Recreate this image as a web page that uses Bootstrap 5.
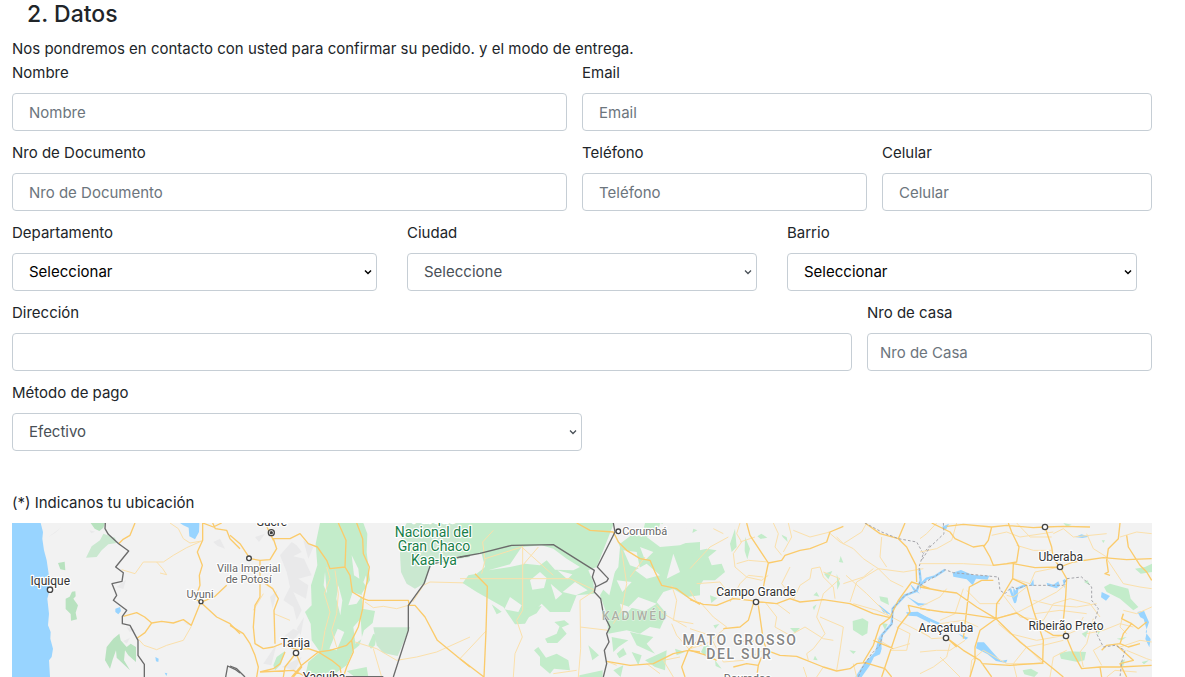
<!DOCTYPE html>
<html lang="es">
<head>
<meta charset="utf-8">
<meta name="viewport" content="width=device-width, initial-scale=1">
<title>Datos</title>
<link rel="stylesheet" href="https://cdn.jsdelivr.net/npm/bootstrap@5.3.0/dist/css/bootstrap.min.css">
<style>
body { font-family: Inter, "Liberation Sans", sans-serif; font-size: 15px; line-height: 24px; color: #212529; }
.checkout { padding: 0 33px 0 12px; }
.checkout h4 { font-size: 23px; line-height: 29px; font-weight: 500; padding-left: 15px; }
.field { margin-bottom: 10px; }
.gap-end { padding-right: 15px; }
.gap-start { padding-left: 15px; }
.form-control, .form-select { height: 38px; font-size: 15px; line-height: 24px; border-color: #c6ced5; border-radius: 4px; padding-left: 16px; background-color: #fff; }
.form-control::placeholder { color: #6c757d; }
.form-control.tight { padding-left: 12px; }
.form-select { color: #495057; background-position: right 4px center; background-size: 8px 8px; background-image: url("data:image/svg+xml,%3Csvg xmlns='http://www.w3.org/2000/svg' viewBox='0 0 8 8'%3E%3Cpath d='M1 2.5l3 3 3-3' fill='none' stroke='%23495057' stroke-width='1.3'/%3E%3C/svg%3E"); }
.form-select.strong { color: #000; background-image: url("data:image/svg+xml,%3Csvg xmlns='http://www.w3.org/2000/svg' viewBox='0 0 8 8'%3E%3Cpath d='M1 2.5l3 3 3-3' fill='none' stroke='%23000' stroke-width='1.5'/%3E%3C/svg%3E"); }
.location { margin-top: 30px; }
.map { background: #f2f2f2; font-family: Roboto, sans-serif; }
.map path { fill: none; stroke-linejoin: round; }
.map .water { fill: #98d4ff; }
.map .park { fill: #c3ecca; }
.map .reserve { fill: #cae8d0; }
.map .wood { fill: #b8e2bf; }
.map .land { fill: #f2f2f2; }
.map .relief { fill: #e9e9ea; }
.map .road { stroke: #fbcb6b; stroke-width: 4; }
.map .lane { stroke: #fbe0ab; stroke-width: 3; }
.map .river { stroke: #98d4ff; stroke-width: 7; }
.map .border-line { stroke: #6b6b6b; stroke-width: 4; }
.map .state { stroke: #a5a5aa; stroke-width: 3; stroke-dasharray: 8 6; }
.map circle { fill: #fff; stroke: #444; stroke-width: 4; }
.map .capital { fill: #222; }
.map text { font-size: 36px; fill: #333; stroke: #fff; stroke-width: 7; stroke-linejoin: round; paint-order: stroke; text-anchor: middle; }
.map .town { font-size: 33px; fill: #666; }
.map .nature { font-size: 42px; fill: #188048; }
.map .region { font-size: 42px; font-weight: 500; fill: #858585; letter-spacing: 5px; }
.map .tribe { font-size: 36px; font-weight: 500; fill: #aab0a4; stroke: #edf3ec; stroke-width: 3; letter-spacing: 6px; }
</style>
</head>
<body>
<main class="checkout">
<form>
<h4 class="mb-2">2. Datos</h4>
<p class="mb-0">Nos pondremos en contacto con usted para confirmar su pedido. y el modo de entrega.</p>
<div class="row g-0">
<div class="col-6 field gap-end"><label class="form-label" for="nombre">Nombre</label><input class="form-control" id="nombre" placeholder="Nombre"></div>
<div class="col-6 field"><label class="form-label" for="email">Email</label><input class="form-control" id="email" type="email" placeholder="Email"></div>
</div>
<div class="row g-0">
<div class="col-6 field gap-end"><label class="form-label" for="documento">Nro de Documento</label><input class="form-control" id="documento" placeholder="Nro de Documento"></div>
<div class="col-3 field"><label class="form-label" for="telefono">Teléfono</label><input class="form-control" id="telefono" type="tel" placeholder="Teléfono"></div>
<div class="col-3 field gap-start"><label class="form-label" for="celular">Celular</label><input class="form-control" id="celular" type="tel" placeholder="Celular"></div>
</div>
<div class="row g-0">
<div class="col-4 field gap-end"><label class="form-label" for="departamento">Departamento</label><select class="form-select strong" id="departamento"><option>Seleccionar</option></select></div>
<div class="col-4 field gap-start gap-end"><label class="form-label" for="ciudad">Ciudad</label><select class="form-select" id="ciudad"><option>Seleccione</option></select></div>
<div class="col-4 field gap-start gap-end"><label class="form-label" for="barrio">Barrio</label><select class="form-select strong" id="barrio"><option>Seleccionar</option></select></div>
</div>
<div class="row g-0">
<div class="col-9 field gap-end"><label class="form-label" for="direccion">Dirección</label><input class="form-control" id="direccion"></div>
<div class="col-3 field"><label class="form-label" for="casa">Nro de casa</label><input class="form-control tight" id="casa" placeholder="Nro de Casa"></div>
</div>
<div class="row g-0">
<div class="col-6 field"><label class="form-label" for="pago">Método de pago</label><select class="form-select" id="pago"><option>Efectivo</option></select></div>
</div>
<div class="location">
<p class="mb-2">(*) Indicanos tu ubicación</p>
<svg class="map d-block w-100" viewBox="0 0 3420 462" role="img" aria-label="Mapa">
<!-- Pacific coast and Altiplano -->
<g transform="translate(-36 -18)">
<path class="water" d="M36 18H122L129 45 127 65 132 100 140 130 146 170 150 215 142 245 147 290 144 325 152 345 151 365 159 395 155 420 147 430 150 480H36z"/>
<path class="water" d="M540 18H598L597 45 585 67 568 58 566 32 550 25zM346 275l14-5 3 12-8 10-9-7zM466 420l10 5-1 10-7-2zM494 467l8 2-3 8z"/>
<path class="wood" d="M272 18H315L310 32 298 42 284 35zM174 138l20-4 2 26-15-3zM197 245l12-6 7-15 10-1 1 15-7 7 14 20-7 22 4 20-18 4-1-20-15-15z"/>
<path class="reserve" d="M258 122L275 88 300 70 310 50 345 62 350 78 325 82 305 100 290 120z"/>
<path class="wood" d="M315 430L320 390 340 365 358 350 362 370 380 390 392 380 408 390 408 435 385 415 375 400 372 430 390 460 350 422 348 400 338 428 330 455z"/>
<path class="relief" d="M145 60L185 30 165 48zM268 40l18 4-12 5zM350 210l28-22-8 28zM370 372l20-10-10 18zM380 330l28 10-20 4zM550 315l22 10-10-2zM640 75l20-10 15 30-22-8z"/>
<path class="lane" d="M510 18L535 35 550 65 570 78 605 72 560 92 520 115 490 135 430 135 405 170 365 158M470 135l18 20 12 18-20-5M414 365L432 385 470 398 500 385 550 370 574 328"/>
<path class="road" d="M405 18L390 55 368 68 356 80M608 18V70L592 105 607 145 598 175 600 205 585 245 602 256 574 325 550 308 520 318 485 313 455 318 434 300 410 287 370 298M455 318L435 347 412 363M602 256L650 300 690 320 720 350M602 256L645 238 680 205M638 18L646 35 680 40 690 65 720 95M608 18L640 30 665 18"/>
<path class="border-line" d="M316 18L315 35 325 52 356 80 386 102 347 150 370 167 366 193 336 200 350 235 340 250 380 280 367 298V320L390 325 414 370V415L433 442V480M677 480L683 447 705 457 720 468"/>
</g>
<!-- Andes foothills and Chaco -->
<g transform="translate(654 -18)">
<path class="relief" d="M150 115L185 75 200 85 215 105 190 118 222 125 245 175 205 185 235 205 228 245 190 225 215 280 200 310 190 270 160 250 180 210 170 165zM120 240l22-20-14 55zM160 360l30-25 20 10-25 30zM100 440l40-60-16 65zM200 335l22-35-10 55zM75 60l30-10-18 25zM155 450l60-30-20 40zM220 70l30 20-15 35z"/>
<path class="park" d="M270 18H400L412 50 410 105 420 190 395 230 397 275 435 282 428 318 402 340 388 385 370 400 350 445 300 480H225L235 435 270 405 245 370 242 320 225 285 245 265 243 205 262 145 257 80z"/>
<path class="park" d="M130 445l10-25 25-18-12 40-18 18zM350 462l60-12 5 30h-40zM415 385l15-35 10 5-5 30-12 10z"/>
<path class="reserve" d="M510 110L515 50 530 18H720V120L685 125 600 145 586 197 555 215 530 200 513 165z"/>
<path class="reserve" d="M430 331H540L503 417 460 408 440 385z"/>
<path class="land" d="M365 115L385 155 388 185 372 175zM397 235L380 260 355 265 368 225zM325 205l12 45-6 45-12-50zM285 165l6 65-10-25zM320 400l-22-5 25-60 20 10zM370 330l22-25 4 60-20 15zM400 195l8-20 4 40z"/>
<path class="lane" d="M290 150L300 185 283 230 300 285 285 340 275 400M315 160L325 230 320 290 305 340 320 390M132 290L180 310M405 255L430 272 460 268 500 275 535 265M548 255L580 205 600 195 720 198M375 375L440 395 500 430 560 420 620 405 720 360M430 395l25 85M70 280l30-50"/>
<path class="road" d="M0 55L30 80 60 125 90 130 120 128 140 95 130 65 180 65 210 50 235 80 262 90 290 130 300 155 345 150 348 70 325 18M345 150L360 175 367 225 400 245 398 275 385 330 365 370 350 385 300 400 265 405 235 395 200 398 155 380 130 390 100 395 75 380 70 330 75 265 90 240 90 130M92 190L128 215 145 245 132 280 135 380M0 325L40 350 60 380 75 415 85 450 80 480M400 245L415 250H535L538 265 555 265 585 300 622 370 720 450M380 18L398 65 400 110 418 150 412 190 400 245M365 370L370 405 350 450 340 480M165 405L150 440 130 455 90 465M198 408L215 450 190 480M198 408L165 450 160 480M265 405L215 445 185 480M265 405L305 430 330 450 335 480M130 70L105 18M90 465l100-5 40 20"/>
<path class="border-line" d="M490 480L535 340V265L582 200 602 142 690 120 720 115M0 447L20 455 45 480M340 479H460"/>
</g>
<!-- Pantanal -->
<g transform="translate(1344 -18)">
<path class="park" d="M0 18H462L410 150 385 160 400 195 403 230 350 235 330 285 270 285 245 260 210 295 195 320 165 322 130 270 50 225 8 198 25 175 50 170 75 150 65 110 0 118z"/>
<path class="park" d="M462 45L480 80 520 50 545 60 555 18H610L560 60 600 90 660 85 720 60V235L680 240 640 215 610 225 590 255 620 290 600 335 570 330 540 350 500 340 445 350 440 290 420 235 440 200 475 150 480 90zM255 365L290 350 300 325 320 350 292 378 262 378zM240 445V420L222 400 235 390 258 422 290 410 325 430 330 460 282 455 270 470zM283 315l30-5 15 12-25 10zM455 360l50 10-30 20-15 15zM510 345l70 15-20 20 25 30-55-25zM385 385l32 30-20 15zM470 410l20-18 10 20-22 12zM515 405l30 10-10 30zM555 430l65-30-5 60-30-10zM358 475l70-15v20h-70zM95 262l30 22-15 8zM200 275l45-8-15 22-45 22zM460 460l30-15-8 35zM645 395l30 10-25 10z"/>
<path class="land" d="M85 160L150 142 185 90 245 85 280 95 320 125 360 150 340 160 285 158 260 130 240 145 195 140 150 150zM210 190l30-25 20 18-8 30-35 5zM292 160l45 12-15 15zM345 195l38 25-35 15-40-10zM410 155l28 10 30-15-20 85-30-28 26-22zM150 240l35 25-10 20-42-8zM272 200l35 30-20 18zM540 90l40 15-25 25zM525 160l35-20 40 35-40 10zM470 190l45 5-28 30zM590 260l-55-20-30 30 50 12zM640 110l20 55-40 20zM480 260l35 12-25 30zM490 100l40 5 10 50-30-10zM600 18l60 20 60-8v45l-70 5-55-25z"/>
<path class="lane" d="M100 40L68 75 75 130 65 170M0 185H330L405 220M188 85V280L170 310 187 360 165 410 160 480M75 125L185 90 280 175M235 90L188 145M355 480L362 395 360 250 405 220M360 330L445 340M280 470L350 460M485 100L500 200 485 280 460 320M555 120L510 180M635 205L650 250 640 310 700 320M590 265L610 290 680 330M640 480L610 430 660 420M0 425L78 342M440 433L470 445M560 440L600 470M690 400L650 355 635 320"/>
<path class="road" d="M350 18L390 40 460 45 475 75 500 100 540 125 570 130 585 165 605 205 650 215 690 245 720 262M45 170L82 208 78 342 72 480 0 425M440 433L510 445 580 440 640 410 685 400 720 405M685 400L665 450 675 480M685 400L715 370"/>
<path class="border-line" d="M0 120L60 109 155 85 280 83 403 160 397 180 407 205 403 225 422 245 430 290 450 330 440 350 447 375 433 400 440 440 430 480M460 18L465 45 412 150 445 185 440 193 407 210"/>
</g>
<!-- Mato Grosso do Sul -->
<g transform="translate(2034 -18)">
<path class="park" d="M5 105L50 95 80 100 55 120 65 145 95 140 105 165 75 190 40 190 20 220 0 210V180L18 160zM120 80l15-45 5 55-15 15zM165 60l15 35-8 32-8-25zM202 58l12-8 18 12-20 4zM275 53l15 8 3 14-15-15zM447 135l5-18 8 20zM402 170l25-8-12 25zM440 170l10 30-8 18zM370 235l10-10 8 14zM488 312l30-8 17 10-3 35-15 8-28-18zM300 333l30 0-15 15zM568 238l25 4 4 22-25-12zM575 318l18 3-8 18zM368 270l12-8-8 18zM478 400l20 3-8 8zM370 428l5-12 8 14zM60 235l22 8-18 15zM10 35l12 5-15 8zM45 380l15 10-5 35-22-20zM75 430l20 25-18-8zM70 325l18-4-12 14z"/>
<path class="water" d="M496 480L525 435 555 405 568 355 575 395 570 412 552 420 540 445 515 480zM648 286l35-2 37 22v12l-40-20-25-2z"/>
<path class="river" d="M568 405L575 355 605 320 608 275 645 235 680 222 692 190 688 155"/>
<path class="water" d="M650 238l35 20 30 3-30 5zM565 262l40 32-25-8zM660 200l30 30-20-10z"/>
<path class="lane" d="M150 18L140 50 155 75 130 110 135 150 170 180 215 190 235 175M100 50L70 35M150 75L195 60M235 135L175 130 140 140M0 155L60 90 115 60M20 200L90 195 105 215 190 220M20 255L0 220M120 255L150 200 175 175 220 180M310 250L330 205 360 185 365 155 390 150 400 180 430 210 435 245M400 165L450 185 400 230 380 300 405 350 370 395 350 410 355 430M468 175L530 230 600 300M415 45L450 75 490 95 520 125 565 155 640 165 700 155M565 155L600 190 640 210M565 155L500 195 480 255M530 18L515 45 460 80 440 60M575 60L570 120 590 150M250 18L265 50 255 90 275 115M295 18L305 60 280 105M300 150L275 200 310 245M225 255L260 300 255 330 300 355 345 330 400 365 430 370M215 350L180 380 150 370M220 400L160 430 100 435M110 330L50 380 0 395M390 300L460 330 450 400 440 460M605 300L720 360M340 450L350 480M490 260L560 280 605 300M490 440L500 480M560 365L610 395 660 380M30 255L70 300 110 330M210 255L260 260 300 290M0 335L60 355 100 435M420 45L360 60 310 40M550 155L520 180 460 200M400 450L380 480M620 330L660 350 650 400 600 400"/>
<path class="road" d="M170 18L180 55 235 138 223 195 215 240M235 138L275 130 285 115 330 100 360 95 410 75 420 45 460 28M0 248L40 262 80 265 130 245 180 250 210 255 260 260 300 245 330 255 400 248 480 260 550 290 600 302 625 250 665 195 680 200 720 215M205 265L220 370 230 400 270 415 320 418 400 450 440 462 480 455 500 440 525 437 585 455 605 480M190 260L175 310 150 330 100 335M575 480L600 405 625 330 660 285 655 265 720 280M600 302L570 325 550 385 520 435M205 445L200 480M215 420L205 445 170 440 130 450M525 18L570 50 625 65 650 90 678 145 680 195M0 400L50 415 80 430M625 65l20-47M550 370l60 25"/>
<path class="state" d="M525 18L575 45 625 65 680 75 700 110 687 150 692 190 680 220 645 235 608 275 607 320 578 350 570 385 545 410 515 455 505 480M720 85L700 110"/>
</g>
<!-- São Paulo and Minas -->
<g transform="translate(2724 -18)">
<path class="park" d="M418 408l30-5 50 2-5 25-20 5-50-10zM308 460l25-5 22 12-12 13-30-8zM552 210L570 200 625 215 632 245 655 270 640 280 600 245 560 225zM645 155l30-5 22-10v25l-35 5zM485 350l20-10-8 22zM492 195l10-6 8 16zM590 365l30-5-15 10zM430 18l25 5-15 6zM545 70l10 0-5 8zM665 435l22-5-15 12zM530 318l18 15-14 20zM600 435l15-8-6 22z"/>
<path class="water" d="M0 160L5 205 0 220zM98 167l25-8 35 15 50 2-5 12-35-3-10 20-18-18-40-8zM280 212l15 18-7 25-8-15zM330 205l10-18 2 20zM380 197l20 6 15-10 5 13-10 8-28-8zM465 60l20-8 22 7-20 4zM545 225l25 12-12 14-15-10zM652 285l20-4 15 35-10 30 15 20-4 25-12-25 5-25-10-35-10-5zM0 290l60 28-5 6L0 300zM115 350l30 12-8 6zM172 376l20 0 25 28 25 28 20-4-4 10-30-6-25-20-35-18zM65 30l22-10-10 20zM428 190l8-5-2 30z"/>
<path class="river" d="M0 205L20 185 45 178 75 158M270 215L285 255 292 215 315 205"/>
<path class="lane" d="M0 140H130L215 145 280 140M110 18L95 70 50 95 0 105M215 55L260 45 300 60 400 45M290 85L340 100 395 100M320 210L280 240 260 235M228 305L295 285 410 225 440 200M250 235L300 300 370 310 400 260 450 245 510 260 540 300M340 250L400 265 470 270 530 260M345 290L420 280 500 290M500 350L550 340 600 320 640 330M600 60L650 45 695 50M560 125L610 200 660 210 695 215M400 50L430 35 460 60 560 50M500 50L520 95 560 120M130 215L105 290 60 310M0 270L60 240 80 215M150 480L155 430 190 400 260 440 370 440M370 380L320 390 280 440 290 480M228 305L260 340 310 380 370 440M135 370L90 400 50 400 0 405M90 380L80 420 40 450 0 470M175 330L130 310 60 320M235 320L270 350 350 370 435 355M490 300L470 340 435 355M520 305L500 380 480 405 490 450M390 480L400 420 440 400M545 445L520 400 545 385M600 390L660 370 695 375M610 290L600 330 620 350M695 270L650 290 610 280M560 480L585 460 650 465M50 18L20 50 0 65M140 220L180 260 240 260M0 340L35 365 80 362M290 18L330 60 395 60M280 185L330 200 345 165 420 150M620 400L680 425 695 430M60 420l60 60M370 385l60-15"/>
<path class="road" d="M35 18L90 45 105 65 160 90 190 85 210 120 220 145 260 140 290 135 297 90 275 45 265 18M80 28L130 22 215 30 260 25 340 32 375 30 430 28 510 30M215 30L205 70 190 90M280 140L345 152 420 150 460 135 550 122 620 128 695 125M375 30L395 90 400 125 420 150 440 185 437 240 430 310 437 355M280 140L278 185 245 240 230 260 228 305 180 340 165 390 165 430 150 480M130 365L148 210 185 190 220 190M278 185L320 205 340 280 370 370 368 438M0 210L65 222 110 228 170 270 228 305 290 288 350 325 400 355 435 355M0 275L70 285 130 290 228 305M80 362L130 400 180 430 215 480M80 362L110 390M228 305L300 375 400 455 430 480M437 355L460 410 485 455 540 450 545 480M185 440L270 445 370 438M600 18L595 65 565 95 560 130 565 165 555 170 570 175M620 55L625 90 660 145 680 165 695 190M545 400L560 385 600 380 610 350 635 320 605 305 610 290M590 385L640 430 600 440 620 480M635 320L655 335 680 315M540 450L600 450 695 445M600 380L625 390 660 380"/>
<path class="state" d="M70 18L72 50 30 90 5 130M0 205L45 178 75 158 100 167 235 180 240 220 255 230 275 210 292 215 320 205 430 205 440 185 485 180 515 210 515 250 535 275 525 310 530 350 550 390 585 385 615 400 605 435 600 480"/>
</g>
<!-- Places: coordinates are three units per map pixel -->
<g>
<circle cx="114" cy="200" r="8"/><circle cx="567" cy="236" r="6"/><circle cx="711" cy="106" r="7"/><circle cx="778" cy="29" r="9"/><circle class="capital" cx="778" cy="29" r="3"/><circle cx="852" cy="390" r="8"/><circle cx="1819" cy="25" r="7"/><circle cx="2232" cy="237" r="8"/><circle cx="2802" cy="345" r="8"/><circle cx="3144" cy="132" r="8"/><circle cx="3162" cy="339" r="8"/><circle cx="3099" cy="12" r="8"/>
<text x="115" y="186">Iquique</text>
<text class="town" x="564" y="225">Uyuni</text>
<text class="town" x="710" y="146">Villa Imperial</text>
<text class="town" x="710" y="180">de Potosí</text>
<text x="780" y="10">Sucre</text>
<text x="850" y="372">Tarija</text>
<text x="936" y="475">Yacuíba</text>
<text class="nature" x="1266" y="0">Parque</text>
<text class="nature" x="1264" y="42">Nacional del</text>
<text class="nature" x="1266" y="84">Gran Chaco</text>
<text class="nature" x="1266" y="127">Kaa-Iya</text>
<text class="town" x="1898" y="36">Corumbá</text>
<text class="tribe" x="1869" y="291">KADIWÉU</text>
<text x="2232" y="219">Campo Grande</text>
<text class="region" x="2184" y="366">MATO GROSSO</text>
<text class="region" x="2182" y="408">DEL SUR</text>
<text class="town" x="2206" y="477">Dourados</text>
<text x="2802" y="327">Araçatuba</text>
<text x="3146" y="114">Uberaba</text>
<text x="3162" y="321">Ribeirão Preto</text>
</g>
</svg>
</div>
</form>
</main>
<script src="https://cdn.jsdelivr.net/npm/bootstrap@5.3.0/dist/js/bootstrap.bundle.min.js"></script>
</body>
</html>
